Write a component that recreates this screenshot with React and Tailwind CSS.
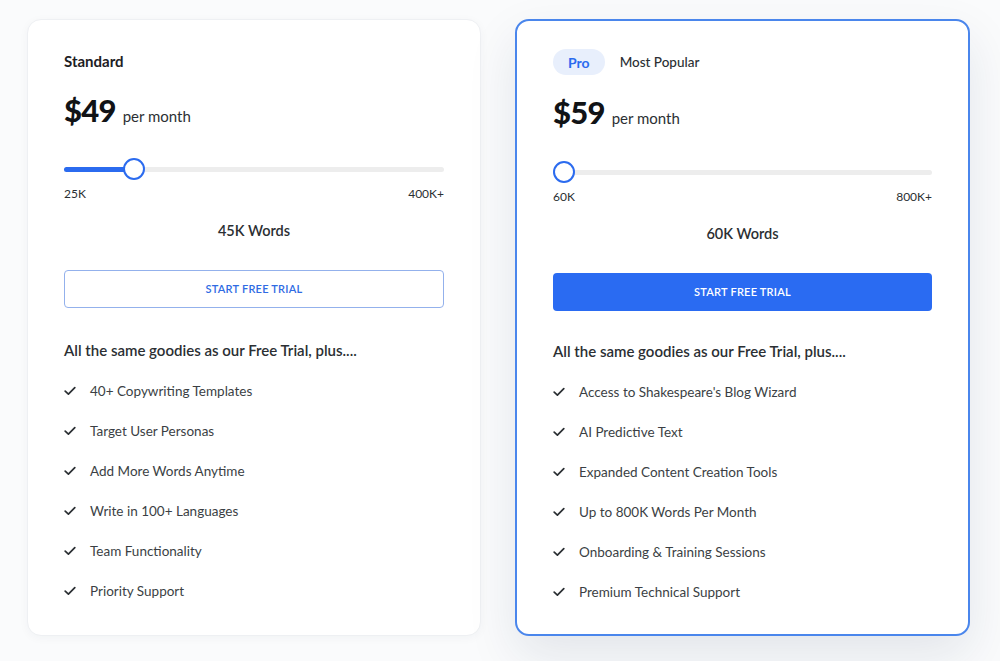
import React from "react";

const plans = [
  {
    name: "Standard",
    price: "$49",
    min: "25K",
    max: "400K+",
    words: "45K Words",
    fill: 71,
    featured: false,
    features: [
      "40+ Copywriting Templates",
      "Target User Personas",
      "Add More Words Anytime",
      "Write in 100+ Languages",
      "Team Functionality",
      "Priority Support",
    ],
  },
  {
    name: "Pro",
    price: "$59",
    min: "60K",
    max: "800K+",
    words: "60K Words",
    fill: 0,
    featured: true,
    features: [
      "Access to Shakespeare's Blog Wizard",
      "AI Predictive Text",
      "Expanded Content Creation Tools",
      "Up to 800K Words Per Month",
      "Onboarding & Training Sessions",
      "Premium Technical Support",
    ],
  },
];

function Check() {
  return (
    <svg width="12" height="10" viewBox="0 0 12 10" fill="none" className="shrink-0">
      <path d="M1.2 5.2 L4.4 8.2 L10.8 1.6" stroke="#2b2f33" strokeWidth="1.7" strokeLinecap="round" strokeLinejoin="round" />
    </svg>
  );
}

function Slider({ fill }) {
  return (
    <div className="relative h-5 flex items-center">
      <div className="h-[5px] w-full rounded-full bg-[#ededed]" />
      {fill > 0 && (
        <div className="absolute left-0 h-[5px] rounded-full bg-[#2b6bef]" style={{ width: fill }} />
      )}
      <div
        className="absolute top-1/2 h-[22px] w-[22px] -translate-y-1/2 rounded-full border-2 border-[#2b6bef] bg-white"
        style={{ left: Math.max(fill - 12, 0) }}
      />
    </div>
  );
}

function PlanCard({ plan }) {
  return (
    <div
      className={
        plan.featured
          ? "w-[455px] rounded-[14px] border-2 border-[#4a86ec] bg-white px-[36px] pt-[28px] pb-[32px] shadow-[0_20px_50px_rgba(20,40,80,0.10)]"
          : "w-[454px] rounded-[14px] border border-[#eef0f3] bg-white px-[36px] pt-[28px] pb-[34px] shadow-[0_2px_10px_rgba(20,40,80,0.04)]"
      }
    >
      <div className="flex h-[26px] items-center">
        {plan.featured ? (
          <>
            <span className="flex h-[26px] items-center rounded-full bg-[#e8effc] px-[15px] text-[14px] font-bold text-[#2b6bef]">
              {plan.name}
            </span>
            <span className="ml-[15px] text-[13.5px] font-medium text-[#2b2f33]">Most Popular</span>
          </>
        ) : (
          <span className="text-[15px] font-bold text-[#1d2024]">{plan.name}</span>
        )}
      </div>

      <div className={plan.featured ? "mt-[19px] flex items-baseline gap-[7px]" : "mt-[18px] flex items-baseline gap-[7px]"}>
        <span className="text-[31px] font-black leading-[36px] tracking-tight text-[#111316]">{plan.price}</span>
        <span className="text-[15px] text-[#2b2f33]">per month</span>
      </div>

      <div className={plan.featured ? "mt-[32px]" : "mt-[31px]"}>
        <Slider fill={plan.fill} />
      </div>
      <div className="mt-[6px] flex justify-between text-[12px] leading-[18px] text-[#2b2f33]">
        <span>{plan.min}</span>
        <span>{plan.max}</span>
      </div>

      <div className="mt-[17px] text-center text-[14.5px] font-semibold leading-[22px] text-[#2b2f33]">{plan.words}</div>

      <button
        className={
          plan.featured
            ? "mt-[28px] h-[38px] w-full rounded-[4px] bg-[#2a6bf2] text-[11px] font-semibold tracking-[0.02em] text-white"
            : "mt-[28px] h-[38px] w-full rounded-[4px] border border-[#93b1ec] bg-white text-[11px] font-semibold tracking-[0.02em] text-[#2f6be3]"
        }
      >
        START FREE TRIAL
      </button>

      <div className={plan.featured ? "mt-[29px] text-[15px] font-semibold leading-[22px] text-[#2b2f33]" : "mt-[31px] text-[15px] font-semibold leading-[22px] text-[#2b2f33]"}>
        All the same goodies as our Free Trial, plus....
      </div>

      <ul className="mt-[20px] flex flex-col gap-[20px]">
        {plan.features.map((f) => (
          <li key={f} className="flex h-[20px] items-center gap-[14px] text-[13.5px] text-[#3b3f44]">
            <Check />
            <span>{f}</span>
          </li>
        ))}
      </ul>
    </div>
  );
}

export default function App() {
  return (
    <div
      className="flex min-h-[661px] w-[1000px] items-start gap-[34px] bg-[#fafbfc] pl-[27px] pt-[19px]"
      style={{ fontFamily: "Lato, 'Noto Sans', sans-serif" }}
    >
      {plans.map((p) => (
        <PlanCard key={p.name} plan={p} />
      ))}
    </div>
  );
}
